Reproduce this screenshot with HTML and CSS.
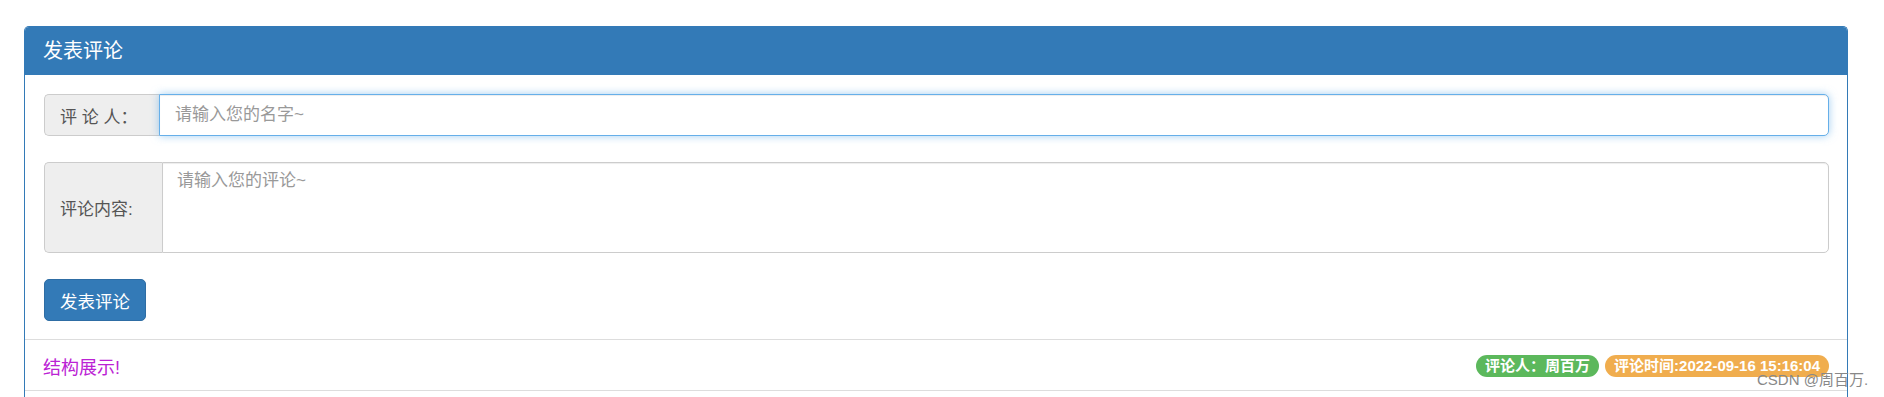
FILE: index.html
```html
<!DOCTYPE html>
<html lang="zh-CN">
<head>
<meta charset="utf-8">
<title>发表评论</title>
<link rel="stylesheet" href="styles.css">
</head>
<body>
<div class="page">
  <div class="panel">
    <div class="panel-heading">发表评论</div>
    <div class="panel-body">
      <div class="input-group">
        <span class="addon addon-name">评 论 人：</span>
        <input class="control control-focus" type="text" placeholder="请输入您的名字~">
      </div>
      <div class="input-group input-group-area">
        <span class="addon addon-area">评论内容:</span>
        <textarea class="control control-area" placeholder="请输入您的评论~"></textarea>
      </div>
      <button class="btn" type="button">发表评论</button>
    </div>
    <ul class="list">
      <li class="list-item">
        <span class="item-text">结构展示!</span>
        <span class="badges">
          <span class="badge badge-green">评论人：周百万</span>
          <span class="badge badge-orange">评论时间:2022-09-16 15:16:04</span>
        </span>
      </li>
    </ul>
  </div>
  <div class="watermark">CSDN @周百万.</div>
</div>
</body>
</html>
```

FILE: styles.css
```css
html, body {
  margin: 0;
  padding: 0;
  background: #fff;
}
body {
  font-family: "Liberation Sans", "Noto Sans CJK SC", sans-serif;
  font-size: 17px;
  color: #333;
  height: 397px;
  overflow: hidden;
}
.page {
  position: relative;
  padding: 26px 36px 0 24px;
  height: 371px;
}
.panel {
  width: 1822px;
  border: 1px solid #337ab7;
  border-bottom: none;
  border-radius: 5px 5px 0 0;
  height: 370px;
}
.panel-heading {
  background: #337ab7;
  color: #fff;
  font-size: 20px;
  line-height: 24px;
  padding: 12px 18px;
  border-radius: 4px 4px 0 0;
}
.panel-body {
  padding: 19px 18px 18px 19px;
}
.input-group {
  display: flex;
  height: 42px;
  margin-bottom: 26px;
}
.input-group-area {
  height: 91px;
}
.addon {
  display: flex;
  align-items: center;
  box-sizing: border-box;
  background: #eee;
  border: 1px solid #ccc;
  border-right: none;
  border-radius: 5px 0 0 5px;
  color: #555;
  font-size: 17px;
  padding: 0 15px;
}
.addon-name {
  width: 115px;
}
.addon-area {
  width: 118px;
}
.control {
  flex: 1;
  box-sizing: border-box;
  border: 1px solid #ccc;
  border-radius: 0 5px 5px 0;
  font-family: "Liberation Sans", "Noto Sans CJK SC", sans-serif;
  font-size: 17px;
  color: #555;
  padding: 0 15px;
  margin: 0;
  outline: none;
  background: #fff;
  box-shadow: inset 0 1px 1px rgba(0, 0, 0, .075);
}
.control-focus {
  border-color: #66afe9;
  box-shadow: inset 0 1px 1px rgba(0, 0, 0, .075), 0 0 9px rgba(102, 175, 233, .6);
}
.control-area {
  resize: none;
  padding: 6px 14px;
  line-height: 24px;
}
.control::placeholder {
  color: #999;
}
.btn {
  display: block;
  box-sizing: border-box;
  width: 102px;
  height: 42px;
  background: #337ab7;
  border: 1px solid #2e6da4;
  border-radius: 5px;
  color: #fff;
  font-family: "Liberation Sans", "Noto Sans CJK SC", sans-serif;
  font-size: 17.5px;
  padding: 0;
}
.list {
  list-style: none;
  margin: 0;
  padding: 0;
}
.list-item {
  display: flex;
  align-items: center;
  justify-content: space-between;
  height: 50px;
  border-top: 1px solid #ddd;
  border-bottom: 1px solid #ddd;
  padding: 0 18px 0 18px;
}
.item-text {
  color: #bb22d4;
  font-size: 18px;
  margin-top: 2px;
}
.badges {
  display: flex;
  gap: 6px;
  margin-top: 2px;
}
.badge {
  display: inline-block;
  color: #fff;
  font-weight: bold;
  font-size: 15px;
  line-height: 22px;
  height: 22px;
  padding: 0 9px;
  border-radius: 11px;
  white-space: nowrap;
}
.badge-green {
  background: #5cb85c;
}
.badge-orange {
  background: #f0ad4e;
}
.watermark {
  position: absolute;
  left: 1757px;
  top: 371px;
  color: #888;
  font-size: 15px;
  line-height: 17px;
  white-space: nowrap;
}
```
